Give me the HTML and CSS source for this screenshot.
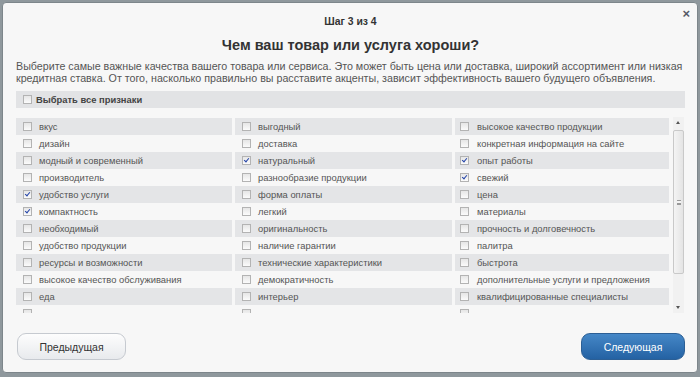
FILE: index.html
```html
<!DOCTYPE html>
<html lang="ru">
<head>
    <meta charset="UTF-8">
    <title>Шаг 3 из 4</title>
    <link rel="stylesheet" href="styles.css">
</head>
<body>
    <div class="modal">
        <span class="close">&times;</span>
        <div class="step">Шаг 3 из 4</div>
        <h1 class="title">Чем ваш товар или услуга хороши?</h1>
        <p class="intro">Выберите самые важные качества вашего товара или сервиса. Это может быть цена или доставка, широкий ассортимент или низкая кредитная ставка. От того, насколько правильно вы расставите акценты, зависит эффективность вашего будущего объявления.</p>

        <div class="select-all"><span class="box"></span>Выбрать все признаки</div>

        <div class="list-wrap">
            <div class="list">
                <div class="row"><div class="cell"><span class="box"></span>вкус</div><div class="cell"><span class="box"></span>выгодный</div><div class="cell"><span class="box"></span>высокое качество продукции</div></div>
                <div class="row"><div class="cell"><span class="box"></span>дизайн</div><div class="cell"><span class="box"></span>доставка</div><div class="cell"><span class="box"></span>конкретная информация на сайте</div></div>
                <div class="row"><div class="cell"><span class="box"></span>модный и современный</div><div class="cell"><span class="box on"></span>натуральный</div><div class="cell"><span class="box on"></span>опыт работы</div></div>
                <div class="row"><div class="cell"><span class="box"></span>производитель</div><div class="cell"><span class="box"></span>разнообразие продукции</div><div class="cell"><span class="box on"></span>свежий</div></div>
                <div class="row"><div class="cell"><span class="box on"></span>удобство услуги</div><div class="cell"><span class="box"></span>форма оплаты</div><div class="cell"><span class="box"></span>цена</div></div>
                <div class="row"><div class="cell"><span class="box on"></span>компактность</div><div class="cell"><span class="box"></span>легкий</div><div class="cell"><span class="box"></span>материалы</div></div>
                <div class="row"><div class="cell"><span class="box"></span>необходимый</div><div class="cell"><span class="box"></span>оригинальность</div><div class="cell"><span class="box"></span>прочность и долговечность</div></div>
                <div class="row"><div class="cell"><span class="box"></span>удобство продукции</div><div class="cell"><span class="box"></span>наличие гарантии</div><div class="cell"><span class="box"></span>палитра</div></div>
                <div class="row"><div class="cell"><span class="box"></span>ресурсы и возможности</div><div class="cell"><span class="box"></span>технические характеристики</div><div class="cell"><span class="box"></span>быстрота</div></div>
                <div class="row"><div class="cell"><span class="box"></span>высокое качество обслуживания</div><div class="cell"><span class="box"></span>демократичность</div><div class="cell"><span class="box"></span>дополнительные услуги и предложения</div></div>
                <div class="row"><div class="cell"><span class="box"></span>еда</div><div class="cell"><span class="box"></span>интерьер</div><div class="cell"><span class="box"></span>квалифицированные специалисты</div></div>
                <div class="row"><div class="cell"><span class="box"></span></div><div class="cell"><span class="box"></span></div><div class="cell"><span class="box"></span></div></div>
            </div>
            <div class="scrollbar">
                <span class="arrow up"></span>
                <span class="thumb"><span class="grip"></span></span>
                <span class="arrow down"></span>
            </div>
        </div>

        <div class="footer">
            <button class="btn prev">Предыдущая</button>
            <button class="btn next">Следующая</button>
        </div>
    </div>
</body>
</html>
```

FILE: styles.css
```css
body {
  margin: 0;
  background-color: #8f989d;
  font-family: "Liberation Sans", Arial, sans-serif;
  height: 377px;
  overflow: hidden;
}
.modal {
  position: relative;
  margin: 2px 2px 0 2px;
  height: 371px;
  box-sizing: border-box;
  border: 1px solid #7d868b;
  border-radius: 4px;
  background-color: #f7f7f7;
  padding: 12px 12px 0 13px;
}
.close {
  position: absolute;
  top: 3px;
  right: 7px;
  font-size: 13px;
  font-weight: bold;
  color: #555a66;
}
.step {
  text-align: center;
  font-size: 10.4px;
  font-weight: bold;
  color: #333;
  line-height: 14px;
}
.title {
  margin: 6px 0 0 0;
  text-align: center;
  font-size: 14.5px;
  color: #333;
  line-height: 20px;
}
.intro {
  margin: 5px 0 0 0;
  font-size: 10.7px;
  line-height: 12px;
  color: #555;
}
.select-all {
  display: flex;
  align-items: center;
  margin-top: 7px;
  height: 17px;
  padding-left: 7px;
  background-color: #e2e3e5;
  font-size: 9.4px;
  font-weight: bold;
  color: #444;
}
.select-all .box {
  margin-right: 4px;
}
.box {
  display: inline-block;
  position: relative;
  width: 7px;
  height: 7px;
  border: 1px solid #b3b3b3;
  background: linear-gradient(#e6e6e6, #fbfbfb);
  flex-shrink: 0;
}
.box.on::after {
  content: "";
  position: absolute;
  left: 1px;
  top: 1px;
  width: 4px;
  height: 2px;
  border-left: 1.5px solid #2444a8;
  border-bottom: 1.5px solid #2444a8;
  transform: rotate(-50deg);
}
.list-wrap {
  display: flex;
  gap: 4px;
  margin-top: 9px;
  height: 196px;
}
.list {
  width: 653px;
  overflow: hidden;
  padding-top: 1px;
}
.row {
  display: grid;
  grid-template-columns: 216px 217px 214px;
  column-gap: 3px;
}
.row:nth-child(odd) .cell {
  background-color: #e4e5e7;
}
.cell {
  display: flex;
  align-items: center;
  height: 17px;
  padding-left: 7px;
  font-size: 9.4px;
  color: #555;
}
.cell .box {
  margin-right: 7px;
}
.cell:nth-child(3) {
  padding-left: 5px;
}
.cell:nth-child(3) .box {
  margin-right: 8px;
}
.scrollbar {
  display: flex;
  flex-direction: column;
  width: 11px;
  background-color: #f1f1f1;
}
.arrow {
  height: 12px;
  position: relative;
}
.arrow::after {
  content: "";
  position: absolute;
  left: 3px;
  border-left: 2px solid transparent;
  border-right: 2px solid transparent;
}
.arrow.up::after {
  top: 4px;
  border-bottom: 3px solid #555;
}
.arrow.down {
  margin-top: auto;
}
.arrow.down::after {
  top: 5px;
  border-top: 3px solid #555;
}
.thumb {
  display: flex;
  align-items: center;
  justify-content: center;
  margin-top: 1px;
  height: 144px;
  box-sizing: border-box;
  border: 1px solid #c9c9c9;
  border-radius: 2px;
  background: linear-gradient(to right, #f4f4f4, #e4e4e4);
}
.grip {
  width: 4px;
  height: 5px;
  border-top: 1px solid #999;
  border-bottom: 1px solid #999;
  background: linear-gradient(#f4f4f4 2px, #999 2px, #999 3px, #f4f4f4 3px);
  box-sizing: border-box;
}
.footer {
  display: flex;
  justify-content: space-between;
  margin-top: 20px;
  padding-left: 1px;
}
.btn {
  height: 27px;
  border-radius: 9px;
  font-family: "Liberation Sans", Arial, sans-serif;
  font-size: 10.5px;
  cursor: pointer;
}
.prev {
  width: 109px;
  border: 1px solid #c6cad0;
  background: linear-gradient(#fdfdfd, #e8eaed);
  color: #333;
}
.next {
  width: 104px;
  border: 1px solid #2c5f95;
  background: linear-gradient(#4587c7, #2462a3);
  color: #fff;
}
```
